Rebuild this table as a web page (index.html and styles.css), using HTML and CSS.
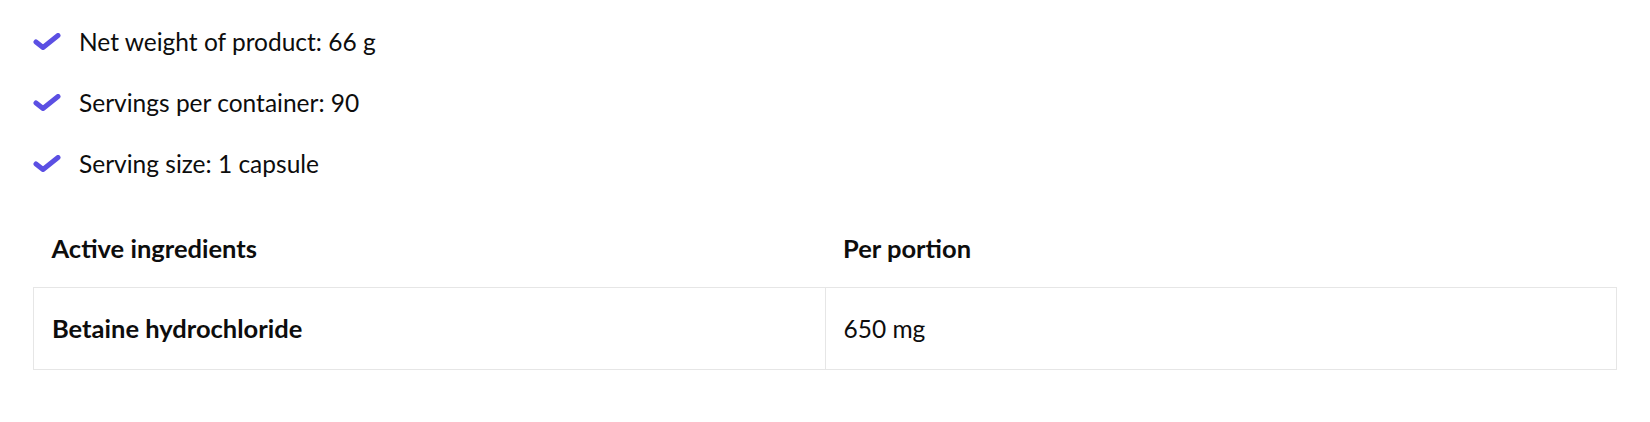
FILE: index.html
```html
<!DOCTYPE html>
<html lang="en">
<head>
<meta charset="utf-8">
<title>Product info</title>
<link rel="stylesheet" href="styles.css">
</head>
<body>
<div class="page">
  <ul class="facts">
    <li class="fact"><svg class="check" viewBox="0 0 28 17" aria-hidden="true"><path d="M3 9 L10 14.5 L25 2.5" /></svg><span>Net weight of product: 66 g</span></li>
    <li class="fact"><svg class="check" viewBox="0 0 28 17" aria-hidden="true"><path d="M3 9 L10 14.5 L25 2.5" /></svg><span>Servings per container: 90</span></li>
    <li class="fact"><svg class="check" viewBox="0 0 28 17" aria-hidden="true"><path d="M3 9 L10 14.5 L25 2.5" /></svg><span>Serving size: 1 capsule</span></li>
  </ul>
  <table class="ingredients">
    <thead>
      <tr><th>Active ingredients</th><th>Per portion</th></tr>
    </thead>
    <tbody>
      <tr><td class="name">Betaine hydrochloride</td><td>650 mg</td></tr>
    </tbody>
  </table>
</div>
</body>
</html>
```
FILE: styles.css
```css
* { box-sizing: border-box; }
html, body { margin: 0; padding: 0; background: #fff; }
body {
  font-family: Lato, "Liberation Sans", sans-serif;
  color: #0d0d0d;
  font-size: 24.5px;
}
.page { padding: 25px 33px 0; }
.facts { list-style: none; margin: 0; padding: 0; display: flex; flex-direction: column; gap: 28px; }
.fact { display: flex; align-items: center; gap: 18px; line-height: 33px; }
.check { width: 28px; height: 17px; flex: none; }
.check path { fill: none; stroke: #5b4fe3; stroke-width: 5; stroke-linecap: round; stroke-linejoin: round; }
.ingredients { width: 100%; border-collapse: collapse; table-layout: fixed; margin-top: 30px; }
.ingredients th, .ingredients td { width: 50%; text-align: left; padding: 22px 18px; line-height: 33px; }
.ingredients th { font-weight: 700; font-size: 25.5px; }
.ingredients td { border: 1px solid #e6e6e6; padding: 24px 18px; }
.ingredients td.name { font-weight: 700; font-size: 25.5px; }
```
